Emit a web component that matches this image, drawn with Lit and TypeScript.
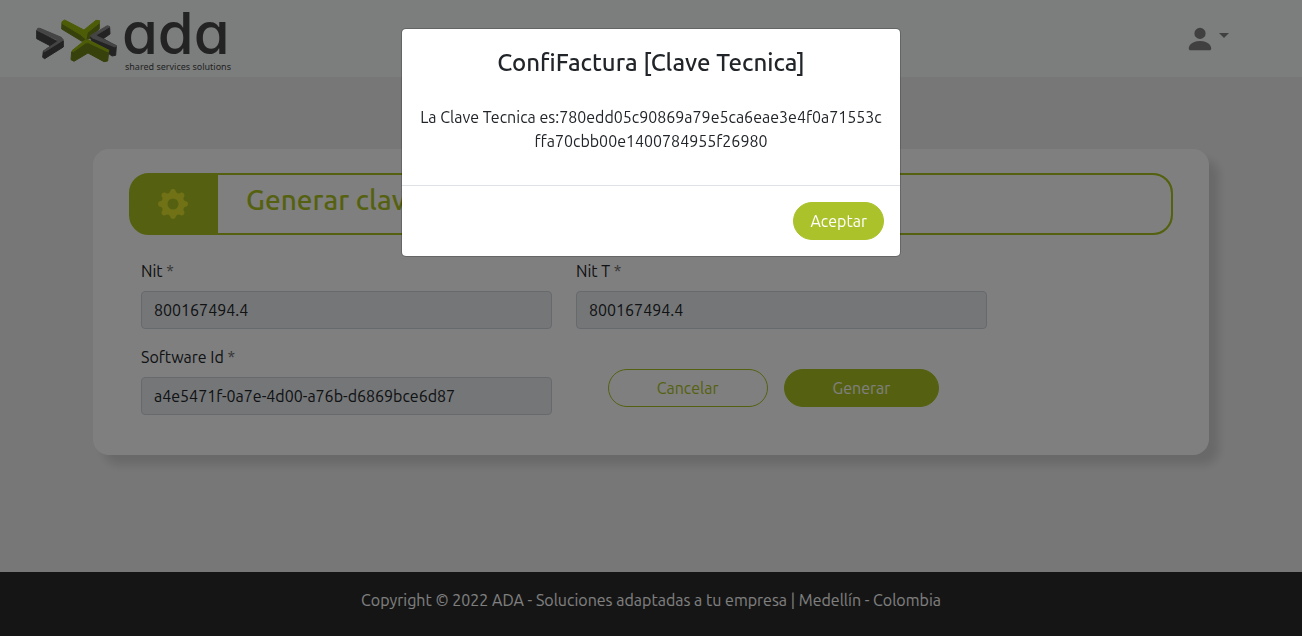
import { LitElement, html, css, svg } from "lit";
import { customElement, property, state } from "lit/decorators.js";

const logoMark = svg`
  <g stroke-linejoin="round" stroke-width="3">
    <path fill="#474747" stroke="#474747" d="M50 91 L108 122 L130 122 L130 141 L74 176 L68 172 L70 154 L92 138 L50 116Z"/>
    <path fill="#8a8a8a" stroke="#8a8a8a" d="M53 85 L60 85 L124 112 L130 120 L74 155 L70 153 L112 125 L110 119 L51 91Z"/>
    <path fill="#6d8319" stroke="#6d8319" d="M126 67 L190 100 L238 70 L238 86 L214 114 L186 124 L125 87Z"/>
    <path fill="#9bb80f" stroke="#9bb80f" d="M126 65 L134 60 L192 90 L228 61 L239 62 L238 69 L202 98 L198 118 L182 104 L127 71Z"/>
    <path fill="#474747" stroke="#474747" d="M212 110 L269 82 L270 102 L250 116 L289 139 L287 166 L276 168 L214 122Z"/>
    <path fill="#8a8a8a" stroke="#8a8a8a" d="M211 107 L262 77 L270 80 L230 104 L230 108 L290 137 L285 141 L216 113Z"/>
    <path fill="#6d8319" stroke="#6d8319" d="M155 155 L196 126 L206 126 L266 157 L263 183 L252 185 L204 159 L162 184 L153 179Z"/>
    <path fill="#9bb80f" stroke="#9bb80f" d="M156 152 L196 120 L206 120 L267 151 L265 156 L205 128 L197 129 L160 155Z"/>
  </g>`;

const gearPath =
  "M9.405 1.05c-.413-1.4-2.397-1.4-2.81 0l-.1.34a1.464 1.464 0 0 1-2.105.872l-.31-.17c-1.283-.698-2.686.705-1.987 1.987l.169.311c.446.82.023 1.841-.872 2.105l-.34.1c-1.4.413-1.4 2.397 0 2.81l.34.1a1.464 1.464 0 0 1 .872 2.105l-.17.31c-.698 1.283.705 2.686 1.987 1.987l.311-.169a1.464 1.464 0 0 1 2.105.872l.1.34c.413 1.4 2.397 1.4 2.81 0l.1-.34a1.464 1.464 0 0 1 2.105-.872l.31.17c1.283.698 2.686-.705 1.987-1.987l-.169-.311a1.464 1.464 0 0 1 .872-2.105l.34-.1c1.4-.413 1.4-2.397 0-2.81l-.34-.1a1.464 1.464 0 0 1-.872-2.105l.17-.31c.698-1.283-.705-2.686-1.987-1.987l-.311.169a1.464 1.464 0 0 1-2.105-.872l-.1-.34zM8 10.93a2.929 2.929 0 1 1 0-5.86 2.929 2.929 0 0 1 0 5.858z";

@customElement("key-dialog")
export class KeyDialog extends LitElement {
  @property() key = "";

  static styles = css`
    .backdrop {
      position: fixed;
      inset: 0;
      background: rgba(0, 0, 0, 0.5);
      padding: 28px 16px;
      overflow: auto;
    }
    .content {
      box-sizing: border-box;
      max-width: 500px;
      margin: 0 auto;
      background: #fff;
      background-clip: padding-box;
      border: 1px solid rgba(0, 0, 0, 0.2);
      border-radius: 5px;
      color: #212529;
      text-align: center;
    }
    .title {
      margin: 0;
      padding: 16px 16px 8px;
      font-size: 24px;
      line-height: 36px;
      font-weight: 500;
    }
    .text {
      margin: 0;
      padding: 16px 16px 32px;
      word-break: break-all;
    }
    .actions {
      display: flex;
      justify-content: flex-end;
      padding: 16px;
      border-top: 1px solid #dee2e6;
    }
    button {
      font: inherit;
      height: 38px;
      padding: 0 16px;
      border: 1px solid #abc22a;
      border-radius: 19px;
      background: #abc22a;
      color: #fff;
      cursor: pointer;
    }
  `;

  render() {
    return html`
      <div class="backdrop">
        <section class="content" role="dialog" aria-modal="true" aria-labelledby="title">
          <h2 class="title" id="title">ConfiFactura [Clave Tecnica]</h2>
          <p class="text">La Clave Tecnica es:${this.key}</p>
          <div class="actions">
            <button type="button" @click=${() => this.dispatchEvent(new Event("accept"))}>Aceptar</button>
          </div>
        </section>
      </div>
    `;
  }
}

@customElement("app-root")
export class AppRoot extends LitElement {
  @state() private open = true;

  static styles = css`
    :host {
      display: flex;
      flex-direction: column;
      min-height: 100vh;
      background: #efefef;
      color: #212529;
      font: 16px/24px Ubuntu, "Noto Sans", sans-serif;
    }
    header {
      display: flex;
      align-items: center;
      justify-content: space-between;
      padding: 0 73px 0 32px;
      background: #f7fcfa;
    }
    .logo {
      display: flex;
      color: #474747;
    }
    .mark {
      display: block;
    }
    .name {
      display: flex;
      flex-direction: column;
      padding: 3px 0 0 2px;
    }
    .word {
      font-family: Inter, sans-serif;
      font-size: 58px;
      line-height: 60px;
      font-weight: 500;
      font-feature-settings: "cv11";
    }
    .slogan {
      padding-left: 3px;
      font: 9px/8px "Noto Sans", sans-serif;
      white-space: nowrap;
    }
    .user {
      display: flex;
      align-items: center;
      gap: 4px;
      padding: 0;
      border: 0;
      background: none;
      color: #808080;
      cursor: pointer;
    }
    .caret {
      margin-bottom: 6px;
      border: 5px solid transparent;
      border-top-color: currentColor;
      border-bottom: 0;
    }
    main {
      flex: 1;
      padding: 72px 12px 64px;
    }
    .card {
      box-sizing: border-box;
      max-width: 1116px;
      margin: 0 auto;
      padding: 24px 36px 40px;
      border-radius: 16px;
      background: #fff;
      box-shadow: 10px 10px 10px rgba(0, 0, 0, 0.12);
    }
    .heading {
      display: flex;
      height: 58px;
      border: 2px solid #abc320;
      border-radius: 20px;
      overflow: hidden;
      background: #abc320;
      color: #abc320;
    }
    .badge {
      box-sizing: border-box;
      display: flex;
      align-items: center;
      justify-content: center;
      width: 87px;
      padding-right: 4px;
      color: #e2e22c;
    }
    h1 {
      flex: 1;
      margin: 0;
      padding: 8px 28px;
      background: #fff;
      border-radius: 0 18px 18px 0;
      font-size: 28px;
      line-height: 34px;
      font-weight: 500;
    }
    form {
      display: grid;
      grid-template-columns: 5fr 5fr 2fr;
      row-gap: 16px;
      padding-top: 24px;
    }
    .field {
      display: flex;
      flex-direction: column;
      gap: 8px;
      padding: 0 12px;
    }
    .required {
      color: #6c6c6c;
    }
    input {
      box-sizing: border-box;
      width: 100%;
      height: 38px;
      padding: 0 12px;
      border: 1px solid #ced4da;
      border-radius: 4px;
      background: #e9ecef;
      color: #212529;
      font: inherit;
    }
    .software {
      grid-column: 1;
    }
    .buttons {
      display: flex;
      align-items: center;
      justify-content: center;
      gap: 16px;
      padding: 16px 16px 0 0;
    }
    .btn {
      height: 38px;
      padding: 0 48px;
      border: 1px solid #abc320;
      border-radius: 19px;
      background: #fff;
      color: #abc320;
      font: inherit;
      cursor: pointer;
    }
    .primary {
      background: #abc320;
      color: #fff;
    }
    footer {
      padding: 16px 16px 24px;
      background: #2a2a2a;
      color: #fff;
      text-align: center;
    }
  `;

  private field(id: string, label: string, value: string, extra = "") {
    return html`
      <div class="field ${extra}">
        <label for=${id}>${label} <span class="required">*</span></label>
        <input id=${id} .value=${value} readonly />
      </div>
    `;
  }

  render() {
    return html`
      <header>
        <div class="logo">
          <svg class="mark" width="88" height="77" viewBox="32 0 88 77" aria-hidden="true">
            <g transform="translate(20 0) scale(.3333)">${logoMark}</g>
          </svg>
          <div class="name">
            <span class="word">ada</span>
            <span class="slogan">shared services solutions</span>
          </div>
        </div>
        <button class="user" type="button" aria-label="Usuario">
          <svg width="30" height="30" viewBox="0 0 16 16" fill="currentColor">
            <path d="M3 14s-1 0-1-1 1-4 6-4 6 3 6 4-1 1-1 1H3zm5-6a3 3 0 1 0 0-6 3 3 0 0 0 0 6z" />
          </svg>
          <span class="caret"></span>
        </button>
      </header>
      <main>
        <section class="card">
          <div class="heading">
            <div class="badge">
              <svg width="30" height="30" viewBox="0 0 16 16" fill="currentColor"><path d=${gearPath} /></svg>
            </div>
            <h1>Generar clave tecnica</h1>
          </div>
          <form @submit=${(e: Event) => e.preventDefault()}>
            ${this.field("nit", "Nit", "800167494.4")}
            ${this.field("nit-t", "Nit T", "800167494.4")}
            ${this.field("software", "Software Id", "a4e5471f-0a7e-4d00-a76b-d6869bce6d87", "software")}
            <div class="buttons">
              <button class="btn" type="button">Cancelar</button>
              <button class="btn primary" type="submit" @click=${() => (this.open = true)}>Generar</button>
            </div>
          </form>
        </section>
      </main>
      <footer>Copyright © 2022 ADA - Soluciones adaptadas a tu empresa | Medellín - Colombia</footer>
      ${this.open
        ? html`<key-dialog
            key="780edd05c90869a79e5ca6eae3e4f0a71553cffa70cbb00e1400784955f26980"
            @accept=${() => (this.open = false)}
          ></key-dialog>`
        : null}
    `;
  }
}
